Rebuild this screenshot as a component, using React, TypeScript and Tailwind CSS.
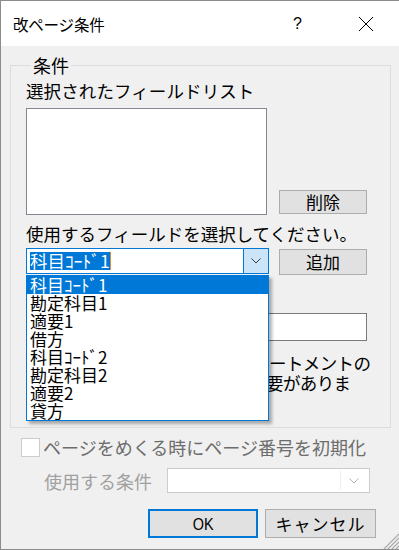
import React from 'react';

const items = ['科目ｺｰﾄﾞ1', '勘定科目1', '適要1', '借方', '科目ｺｰﾄﾞ2', '勘定科目2', '適要2', '貸方'];

function Chevron({ color }: { color: string }) {
  return (
    <svg width="10" height="6" viewBox="0 0 10 6" fill="none">
      <path d="M0.5 0.5 L5 5 L9.5 0.5" stroke={color} strokeWidth="1" />
    </svg>
  );
}

export default function App() {
  return (
    <div className="w-[399px] h-[550px] bg-[#f0f0f0] border-l border-t border-b border-[#8c8c8c] flex flex-col font-['Noto_Sans_CJK_JP',sans-serif] text-black overflow-hidden">
      {/* Title bar */}
      <div className="h-[45px] bg-white flex items-center shrink-0">
        <span className="ml-[12px] text-[15.5px] leading-[20px] tracking-[-0.2px]">改ページ条件</span>
        <span className="ml-auto mr-[56px] text-[16px] leading-[20px] font-['Liberation_Sans',sans-serif]">?</span>
        <svg width="16" height="16" viewBox="0 0 16 16" className="mr-[25px]">
          <path d="M1 1 L15 15 M15 1 L1 15" stroke="#000" strokeWidth="1" />
        </svg>
      </div>

      {/* Body */}
      <div className="relative flex-1 flex flex-col">
        <fieldset className="mt-[9px] ml-[9px] w-[381px] h-[373px] border border-[#dcdcdc] pl-[15px] pr-0 relative">
          <legend className="ml-[5px] px-[2px] text-[18px] leading-[20px]">条件</legend>
          <div className="mt-[6px] text-[17.5px] leading-[20px] tracking-[0.1px]">選択されたフィールドリスト</div>
          <div className="mt-[7px] flex items-end">
            <div className="w-[241px] h-[107px] bg-white border border-[#828790]" />
            <button className="ml-[12px] mb-[1px] w-[88px] h-[24px] bg-[#e1e1e1] border border-[#adadad] text-[17px] leading-[20px]">削除</button>
          </div>
          <div className="mt-[9px] text-[17.5px] leading-[20px] whitespace-nowrap">使用するフィールドを選択してください。</div>
          <div className="mt-[4px] flex items-start">
            <div className="w-[243px] h-[26px] bg-white border border-[#0078d7] flex">
              <div className="flex-1 flex items-center pl-[3px]">
                <span className="bg-[#0078d7] text-white text-[17.5px] leading-[18px] h-[18px] flex items-center">科目ｺｰﾄﾞ1</span>
                <span className="w-px h-[18px] bg-[#e08a3c]" />
              </div>
              <div className="w-[25px] bg-[#cce4f7] border-l border-[#0078d7] flex items-center justify-center">
                <Chevron color="#3c3c3c" />
              </div>
            </div>
            <button className="ml-[10px] mt-[1px] w-[88px] h-[26px] bg-[#e1e1e1] border border-[#adadad] text-[17px] leading-[20px]">追加</button>
          </div>
          {/* content partly hidden under the popup */}
          <div className="mt-[38px] w-[341px] h-[28px] bg-white border border-[#7a7a7a]" />
          <div className="mt-[12px] pl-[243px] text-[17.5px] leading-[20px] whitespace-nowrap tracking-[-0.6px]">
            <div>ートメントの</div>
            <div className="-ml-[3px]">要がありま</div>
          </div>

          {/* popup list */}
          <div className="absolute left-[15px] top-[200px] w-[243px] h-[146px] bg-white border border-[#0078d7] shadow-[3px_3px_3px_rgba(0,0,0,0.3)] z-10">
            {items.map((it, i) => (
              <div
                key={it}
                className={
                  'h-[18px] pl-[3px] text-[17px] leading-[18px] whitespace-nowrap ' +
                  (i === 0 ? 'bg-[#0078d7] text-white' : 'text-black')
                }
              >
                {it}
              </div>
            ))}
          </div>
        </fieldset>

        {/* checkbox row */}
        <div className="mt-[9px] ml-[20px] flex items-center">
          <div className="w-[19px] h-[19px] bg-white border border-[#cccccc]" />
          <span className="ml-[3px] text-[18px] leading-[20px] text-[#6d6d6d] whitespace-nowrap">ページをめくる時にページ番号を初期化</span>
        </div>

        {/* condition combo */}
        <div className="mt-[11px] ml-[43px] flex items-center">
          <span className="text-[18px] leading-[20px] text-[#a0a0a0] w-[123px] whitespace-nowrap">使用する条件</span>
          <div className="w-[203px] h-[25px] bg-white border border-[#cccccc] flex p-[2px]">
            <div className="flex-1 bg-white border-r border-[#eeeeee]" />
            <div className="w-[26px] flex items-center justify-center">
              <Chevron color="#b4b4b4" />
            </div>
          </div>
        </div>

        {/* buttons */}
        <div className="mt-[16px] ml-[147px] flex gap-[7px]">
          <button className="w-[110px] h-[29px] bg-[#e1e1e1] border-2 border-[#0078d7] text-[17px] leading-[20px]">
            <span className="inline-block scale-x-[0.85] font-['Liberation_Sans',sans-serif]">OK</span>
          </button>
          <button className="w-[111px] h-[29px] bg-[#e1e1e1] border border-[#adadad] text-[17px] leading-[20px] tracking-[1px]">キャンセル</button>
        </div>

        {/* resize grip */}
        <svg width="18" height="16" viewBox="0 0 18 16" className="absolute right-0 bottom-0">
          <path d="M18 1 L3 16 M18 5 L7 16 M18 9 L11 16 M18 13 L15 16" stroke="#a8a8a8" strokeWidth="1.2" />
        </svg>
      </div>
    </div>
  );
}
